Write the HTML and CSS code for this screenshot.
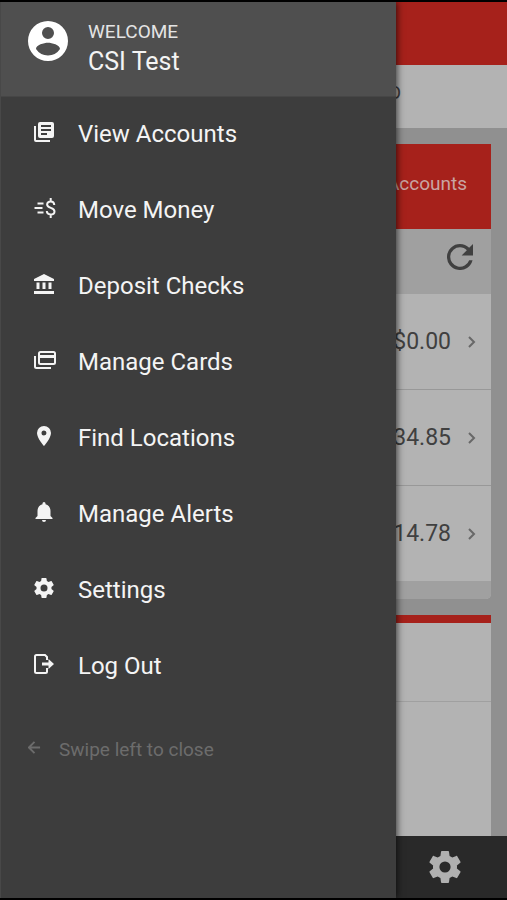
FILE: index.html
```html
<!DOCTYPE html>
<html lang="en">
<head>
<meta charset="utf-8">
<meta name="viewport" content="width=device-width, initial-scale=1">
<title>Accounts</title>
<link rel="stylesheet" href="styles.css">
</head>
<body>
<div class="app">
  <header class="topbar"></header>
  <div class="subbar"><span>O</span></div>
  <main class="content">
    <section class="card">
      <div class="card-head">Accounts</div>
      <div class="card-tools">
        <button class="icon-button" type="button" aria-label="Refresh">
          <svg class="refresh" viewBox="4 4 16 16"><path d="M17.65 6.35A7.96 7.96 0 0 0 12 4a8 8 0 1 0 7.73 10h-2.08A6 6 0 1 1 12 6c1.66 0 3.14.69 4.22 1.78L13 11h7V4z"/></svg>
        </button>
      </div>
      <ul class="balances">
        <li><a class="balance" href="#"><span>$0.00</span><svg class="chevron" viewBox="0 0 8 12"><path d="M1 1l5 5-5 5"/></svg></a></li>
        <li><a class="balance" href="#"><span>34.85</span><svg class="chevron" viewBox="0 0 8 12"><path d="M1 1l5 5-5 5"/></svg></a></li>
        <li><a class="balance" href="#"><span>14.78</span><svg class="chevron" viewBox="0 0 8 12"><path d="M1 1l5 5-5 5"/></svg></a></li>
      </ul>
      <div class="card-foot"></div>
    </section>
    <section class="panel">
      <div class="panel-head"></div>
    </section>
  </main>
  <footer class="tabbar">
    <button class="icon-button" type="button" aria-label="Settings">
      <svg class="gear" viewBox="2 2 20 20"><path d="M19.43 12.98c.04-.32.07-.64.07-.98s-.03-.66-.07-.98l2.11-1.65c.19-.15.24-.42.12-.64l-2-3.46c-.12-.22-.39-.3-.61-.22l-2.49 1c-.52-.4-1.08-.73-1.69-.98l-.38-2.65A.49.49 0 0 0 14 2h-4c-.25 0-.46.18-.49.42l-.38 2.65c-.61.25-1.17.59-1.69.98l-2.49-1c-.23-.09-.49 0-.61.22l-2 3.46c-.13.22-.07.49.12.64l2.11 1.65c-.04.32-.07.65-.07.98s.03.66.07.98l-2.11 1.65c-.19.15-.24.42-.12.64l2 3.46c.12.22.39.3.61.22l2.49-1c.52.4 1.08.73 1.69.98l.38 2.65c.03.24.24.42.49.42h4c.25 0 .46-.18.49-.42l.38-2.65c.61-.25 1.17-.59 1.69-.98l2.49 1c.23.09.49 0 .61-.22l2-3.46c.12-.22.07-.49-.12-.64zM12 15.5a3.5 3.5 0 1 1 0-7 3.5 3.5 0 0 1 0 7z"/></svg>
    </button>
  </footer>

  <aside class="drawer">
    <div class="profile">
      <svg class="avatar" viewBox="2 2 20 20"><path d="M12 2a10 10 0 1 0 0 20 10 10 0 0 0 0-20zm0 3a3 3 0 1 1 0 6 3 3 0 0 1 0-6zm0 14.2a7.2 7.2 0 0 1-6-3.22c.03-1.99 4-3.08 6-3.08 1.99 0 5.97 1.09 6 3.08a7.2 7.2 0 0 1-6 3.22z"/></svg>
      <div>
        <div class="welcome">WELCOME</div>
        <div class="name">CSI Test</div>
      </div>
    </div>
    <nav class="menu">
      <a href="#"><svg viewBox="0 0 20 20"><path d="M6 0h12a2 2 0 0 1 2 2v12a2 2 0 0 1-2 2H6a2 2 0 0 1-2-2V2a2 2 0 0 1 2-2zm1 3v2h10V3zm0 4v2h10V7zm0 4v2h6v-2zM0 4h2v14h14v2H2a2 2 0 0 1-2-2z"/></svg>View Accounts</a>
      <a href="#"><svg class="money" viewBox="0 0 21 20"><path class="line" d="M3 5.500h6M0 10h8M3 14.500h6M19.800 7C19.600 4.600 18.400 3.600 16.200 3.600c-2.200 0-3.600 1.100-3.600 2.900 0 4.300 7.400 2.500 7.400 6.900 0 1.900-1.500 3-3.800 3s-3.800-1.200-3.900-3.400M16.200 0v3.600M16.200 16.400V20"/></svg>Move Money</a>
      <a href="#"><svg viewBox="0 0 20 20"><path d="M10 0l10 5v2H0V5zM2.500 8.500h3V15h-3zM8.500 8.500h3V15h-3zM14.500 8.500h3V15h-3zM0 17h20v3H0z"/></svg>Deposit Checks</a>
      <a href="#"><svg class="cards" viewBox="0 0 22 18"><path class="line" d="M6.500 1h13A1.500 1.500 0 0 1 21 2.500v9a1.500 1.500 0 0 1-1.500 1.500h-13A1.500 1.500 0 0 1 5 11.500v-9A1.500 1.500 0 0 1 6.500 1zM1 5v10.500A1.500 1.500 0 0 0 2.500 17H17"/><path d="M5 4h16v3H5z"/></svg>Manage Cards</a>
      <a href="#"><svg viewBox="2 2 20 20"><path d="M12 2a7 7 0 0 0-7 7c0 5.250 7 13 7 13s7-7.750 7-13a7 7 0 0 0-7-7zm0 9.500a2.500 2.500 0 1 1 0-5 2.500 2.500 0 0 1 0 5z"/></svg>Find Locations</a>
      <a href="#"><svg viewBox="2 2 20 20"><path d="M12 22a2 2 0 0 0 2-2h-4a2 2 0 0 0 2 2zM18.500 16v-5c0-3.300-1.900-6-5-6.700V3.500a1.500 1.500 0 0 0-3 0v.8c-3.100.7-5 3.400-5 6.700v5l-2 2v1h17v-1z"/></svg>Manage Alerts</a>
      <a href="#"><svg viewBox="2 2 20 20"><path d="M19.43 12.980c.04-.32.07-.64.07-.98s-.03-.66-.07-.98l2.110-1.650c.19-.15.24-.42.12-.64l-2-3.460c-.12-.22-.39-.3-.61-.22l-2.490 1c-.52-.4-1.080-.73-1.690-.98l-.38-2.650A.49.49 0 0 0 14 2h-4c-.25 0-.46.18-.49.42l-.38 2.650c-.61.25-1.170.59-1.690.98l-2.490-1c-.23-.09-.49 0-.61.22l-2 3.460c-.13.22-.07.49.12.64l2.110 1.650c-.04.32-.07.65-.07.98s.03.66.07.98l-2.110 1.650c-.19.15-.24.42-.12.64l2 3.460c.12.22.39.3.61.22l2.490-1c.52.4 1.080.73 1.690.98l.38 2.650c.03.24.24.42.49.42h4c.25 0 .46-.18.49-.42l.38-2.650c.61-.25 1.170-.59 1.690-.98l2.490 1c.23.09.49 0 .61-.22l2-3.460c.12-.22.07-.49-.12-.64zM12 15.500a3.500 3.500 0 1 1 0-7 3.500 3.500 0 0 1 0 7z"/></svg>Settings</a>
      <a href="#"><svg viewBox="0 0 20 20"><path class="line" d="M13 6V3L11 1H2.500A1.500 1.500 0 0 0 1 2.500v15A1.500 1.500 0 0 0 2.500 19h9a1.500 1.500 0 0 0 1.500-1.500V14"/><path d="M8 8.500h6.500V5l5.500 5-5.500 5v-3.500H8z"/></svg>Log Out</a>
    </nav>
    <div class="hint"><svg viewBox="0 0 14 14"><path d="M13 7H1M7 1L1 7l6 6"/></svg>Swipe left to close</div>
  </aside>
</div>
</body>
</html>
```
FILE: styles.css
```css
* {
  box-sizing: border-box;
}

body {
  margin: 0;
  background: #000;
  font-family: Roboto, sans-serif;
}

svg {
  display: block;
  flex: none;
  fill: currentColor;
}

a {
  color: inherit;
  text-decoration: none;
}

.app {
  position: relative;
  display: flex;
  flex-direction: column;
  min-height: 100vh;
  overflow: hidden;
  background: #909090;
  border-top: 2px solid #000;
  border-bottom: 2px solid #000;
}

.topbar {
  height: 63px;
  background: #a6211b;
}

.subbar {
  display: flex;
  align-items: center;
  justify-content: flex-end;
  height: 63px;
  padding: 0 106px 8px 0;
  background: #b3b3b3;
  color: #3c3c3c;
  font-size: 19px;
}

.content {
  display: flex;
  flex: 1;
  flex-direction: column;
  gap: 16px;
  padding: 16px 16px 0;
}

.card {
  overflow: hidden;
  border-radius: 0 0 5px 5px;
  background: #b3b3b3;
}

.card-head {
  display: flex;
  align-items: center;
  justify-content: flex-end;
  height: 85px;
  padding: 0 24px 6px 0;
  background: #a6211b;
  color: #c9a5a3;
  font-size: 19px;
}

.card-tools {
  display: flex;
  align-items: center;
  justify-content: flex-end;
  height: 65px;
  padding: 0 18px 10px 0;
  background: #a0a0a0;
}

.icon-button {
  display: block;
  padding: 0;
  border: 0;
  background: none;
}

.refresh {
  width: 26px;
  height: 26px;
  color: #404040;
}

.balances {
  margin: 0;
  padding: 0;
  list-style: none;
}

.balance {
  display: flex;
  align-items: center;
  justify-content: flex-end;
  gap: 17px;
  height: 96px;
  padding-right: 15px;
  border-bottom: 1px solid #989898;
  color: #404040;
  font-size: 23px;
}

.balances li:last-child .balance {
  border-bottom-color: #a0a0a0;
}

.chevron {
  width: 8px;
  height: 12px;
  fill: none;
  stroke: #686868;
  stroke-width: 2;
}

.card-foot {
  height: 17px;
  background: #a0a0a0;
}

.panel {
  flex: 1;
  border-top: 8px solid #a6211b;
  background: #b3b3b3;
}

.panel-head {
  height: 79px;
  border-bottom: 1px solid #a0a0a0;
}

.tabbar {
  display: flex;
  align-items: center;
  justify-content: flex-end;
  height: 62px;
  padding-right: 46px;
  background: #292929;
}

.gear {
  width: 32px;
  height: 32px;
  color: #b0b0b0;
}

.drawer {
  position: absolute;
  top: 0;
  bottom: 0;
  left: 0;
  width: 78.2%;
  background: #3d3d3d;
  border-left: 1px solid #484848;
  box-shadow: 1px 0 7px rgba(0, 0, 0, 0.7);
  color: #f4f4f4;
}

.profile {
  display: flex;
  gap: 20px;
  height: 95px;
  padding: 19px 27px 0;
  background: #4f4f4f;
  border-bottom: 1px solid #464646;
}

.avatar {
  width: 40px;
  height: 40px;
  color: #fff;
}

.welcome {
  color: #e4e4e4;
  font-size: 19px;
  line-height: 22px;
}

.name {
  font-size: 25px;
  line-height: 38px;
}

.menu a {
  display: flex;
  align-items: center;
  gap: 24px;
  height: 76px;
  padding: 0 0 2px 33px;
  font-size: 24px;
}

.menu svg {
  width: 20px;
  height: 20px;
  margin-bottom: 4px;
}

.menu .money,
.menu .cards {
  width: 22px;
  margin-right: -2px;
}

.menu .cards {
  height: 18px;
}

.menu .line {
  fill: none;
  stroke: currentColor;
  stroke-width: 2;
}

.hint {
  display: flex;
  align-items: center;
  gap: 18px;
  height: 88px;
  padding-left: 27px;
  color: #6c6c6c;
  font-size: 19px;
}

.hint svg {
  width: 13px;
  height: 13px;
  margin-bottom: 3px;
  fill: none;
  stroke: currentColor;
  stroke-width: 2;
}
```
